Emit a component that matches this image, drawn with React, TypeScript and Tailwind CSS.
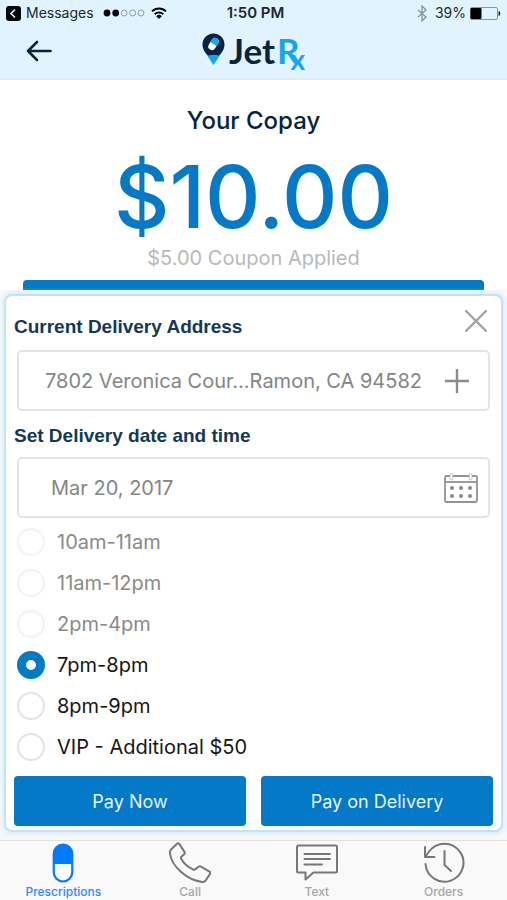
import { useState } from "react";

type Slot = { id: string; label: string; disabled?: boolean };

const slots: Slot[] = [
  { id: "10-11", label: "10am-11am", disabled: true },
  { id: "11-12", label: "11am-12pm", disabled: true },
  { id: "14-16", label: "2pm-4pm", disabled: true },
  { id: "19-20", label: "7pm-8pm" },
  { id: "20-21", label: "8pm-9pm" },
  { id: "vip", label: "VIP - Additional $50" },
];

function StatusBar() {
  return (
    <div className="grid h-[26px] grid-cols-3 items-center px-[6px] text-[14px] leading-[26px] text-[#1c2830]">
      <div className="flex items-center whitespace-nowrap">
        <svg width="15" height="15" viewBox="0 0 15 15" aria-hidden="true">
          <rect width="15" height="15" rx="3" fill="#05080a" />
          <path d="M9 3.5 5 7.5l4 4" fill="none" stroke="#e1f3fe" strokeWidth="1.6" />
        </svg>
        <span className="ml-[5px]">Messages</span>
        <svg className="ml-[9px]" width="43" height="10" viewBox="0 0 43 10" aria-hidden="true">
          <circle cx="4" cy="5" r="3.4" fill="#05080a" />
          <circle cx="12.7" cy="5" r="3.4" fill="#05080a" />
          <circle cx="21.2" cy="5" r="3" fill="none" stroke="#7d8a92" strokeWidth="0.8" />
          <circle cx="29.6" cy="5" r="3" fill="none" stroke="#7d8a92" strokeWidth="0.8" />
          <circle cx="38" cy="5" r="3" fill="none" stroke="#7d8a92" strokeWidth="0.8" />
        </svg>
        <svg className="ml-[5px] shrink-0" width="16" height="12" viewBox="0 0 16 12" aria-hidden="true">
          <g fill="none" stroke="#05080a" strokeWidth="1.9">
            <path d="M1 4.4a10 10 0 0 1 14 0" />
            <path d="M3.7 7.2a6.2 6.2 0 0 1 8.6 0" />
          </g>
          <path d="M8 12 5.2 9.2a4 4 0 0 1 5.6 0z" fill="#05080a" />
        </svg>
      </div>
      <div className="pl-1 text-center text-[15px] font-semibold">1:50 PM</div>
      <div className="flex items-center justify-end">
        <svg width="10" height="17" viewBox="0 0 10 17" fill="none" stroke="#84929a" strokeWidth="1.3" aria-hidden="true">
          <path d="M1 5l8 7-4 4V1l4 4-8 7" />
        </svg>
        <span className="ml-2">39%</span>
        <svg className="ml-1" width="31" height="13" viewBox="0 0 31 13" aria-hidden="true">
          <rect x="0.5" y="0.5" width="27" height="12" rx="1.5" fill="none" stroke="#8a969d" />
          <rect x="0.5" y="1" width="11" height="11" rx="1" fill="#000" />
          <path d="M29 4.5q2 2 0 4z" fill="#222" stroke="#222" />
        </svg>
      </div>
    </div>
  );
}

function Logo() {
  return (
    <div className="flex items-start font-['Lato',sans-serif] font-bold" role="img" aria-label="JetRx">
      <svg className="mt-[7px]" width="23" height="33" viewBox="0 0 23 33" aria-hidden="true">
        <path d="M3.5 20h16L11.5 32z" fill="#14a5f5" />
        <path d="M11.5 .5C5 .5 .5 5.500 .5 11.500c0 6 4 9.500 6 11q5 -1.500 10 0c2-1.500 6-5 6-11C22.500 5.500 18 .5 11.500 .5z" fill="#04243f" />
        <g transform="rotate(32 11.5 11)">
          <rect x="7.8" y="4.5" width="7.4" height="13" rx="3.7" fill="#fff" />
          <path d="M7.800 11V8.200a3.700 3.700 0 0 1 7.400 0V11z" fill="#14a5f5" />
        </g>
      </svg>
      <span className="ml-1 text-[35px] leading-[48px] text-[#04243f]">Jet</span>
      <span className="ml-[2px] text-[35px] leading-[48px] text-[#14a5f5]">R</span>
      <span className="-ml-[9px] mt-4 text-[28px] leading-[34px] text-[#14a5f5]">x</span>
    </div>
  );
}

function PillIcon() {
  return (
    <svg width="22" height="40" viewBox="0 0 22 40" aria-hidden="true">
      <rect x="1.75" y="1.5" width="18.5" height="37" rx="9.25" fill="#fafafa" stroke="#007aff" strokeWidth="2.2" />
      <path d="M1.750 21V11a9.250 9.250 0 0 1 18.500 0v10z" fill="#007aff" />
    </svg>
  );
}

function PhoneIcon() {
  return (
    <svg width="42" height="42" viewBox="0 0 42 42" fill="none" stroke="#777" strokeWidth="2" strokeLinejoin="round" aria-hidden="true">
      <path d="M2 7.500 8.300 1.600q1.200-1 2 .3l5.300 8.200q.6 1.200-.4 2.200l-2.800 2.500q-.8.800-.2 2 4 7.300 12 10.700 1.300.5 2.200-.4l3.300-2.400q1.100-.8 2.300-.1l8.500 5q1.400.9.600 2.300l-4.300 6.400q-1.200 1.700-3.600 1.600C18.500 38.500 2.500 24.500 1 11.500q-.3-2.500 1-4z" />
    </svg>
  );
}

function TextIcon() {
  return (
    <svg width="42" height="38" viewBox="0 0 42 38" fill="none" stroke="#777" strokeWidth="2" strokeLinejoin="round" aria-hidden="true">
      <path d="M2.500 1.500h37q1.500 0 1.500 1.500v24q0 1.500-1.500 1.500H17.500L9.500 35.500v-7h-7Q1 28.500 1 27V3q0-1.500 1.500-1.500z" />
      <path d="M8.500 10h25.500M8.500 15h25.500M8.500 20.500h17.500" strokeLinecap="round" />
    </svg>
  );
}

function OrdersIcon() {
  return (
    <svg width="42" height="42" viewBox="0 0 42 42" fill="none" stroke="#777" strokeWidth="2" strokeLinecap="round" strokeLinejoin="round" aria-hidden="true">
      <path d="M2.500 22a19 19 0 1 0 4-13L2.500 14.500" />
      <path d="M2 5v10h9.500" />
      <path d="M21.500 9v14l6.500 6" />
    </svg>
  );
}

function CalendarIcon() {
  return (
    <svg width="34" height="32" viewBox="0 0 34 32" fill="none" aria-hidden="true">
      <rect x="1" y="4" width="32" height="26" rx="1.5" stroke="#929292" strokeWidth="1.8" />
      <path d="M1 10h32" stroke="#929292" strokeWidth="1.8" />
      <rect x="6" y="1.500" width="2.8" height="6.500" rx="1.4" fill="#fff" stroke="#bcbcbc" />
      <rect x="25.200" y="1.500" width="2.8" height="6.500" rx="1.4" fill="#fff" stroke="#bcbcbc" />
      <g fill="#8a8a8a">
        <circle cx="8" cy="16" r="2" />
        <circle cx="17" cy="16" r="2" />
        <circle cx="26" cy="16" r="2" />
        <circle cx="8" cy="24" r="2" />
        <circle cx="17" cy="24" r="2" />
        <circle cx="26" cy="24" r="2" />
      </g>
    </svg>
  );
}

const tabs = [
  { label: "Prescriptions", icon: <PillIcon />, active: true },
  { label: "Call", icon: <PhoneIcon />, active: false },
  { label: "Text", icon: <TextIcon />, active: false },
  { label: "Orders", icon: <OrdersIcon />, active: false },
];

export default function App() {
  const [slot, setSlot] = useState("19-20");
  const [address, setAddress] = useState("7802 Veronica Cour...Ramon, CA 94582");
  const [date, setDate] = useState("Mar 20, 2017");

  return (
    <div className="flex min-h-screen flex-col bg-white font-['Inter','Liberation_Sans',sans-serif]">
      <header className="h-20 border-b-2 border-[#d9ebf6] bg-[#e1f3fe]">
        <StatusBar />
        <div className="grid h-[50px] grid-cols-[1fr_auto_1fr] items-center px-[26px]">
          <button type="button" aria-label="Back" className="w-[26px]">
            <svg width="26" height="22" viewBox="0 0 26 22" fill="none" stroke="#04243f" strokeWidth="2.6" strokeLinecap="round" strokeLinejoin="round" aria-hidden="true">
              <path d="M24.500 11H2M11 2 2 11l9 9" />
            </svg>
          </button>
          <Logo />
        </div>
      </header>

      <section className="flex h-[200px] flex-col items-center pt-[25px]">
        <h1 className="text-[24px] leading-8 font-medium text-[#04243f]">Your Copay</h1>
        <p className="mt-[10px] text-[86px] leading-[100px] font-medium text-[#0379c7]">$10.00</p>
        <p className="text-[20px] leading-[22px] text-[#b9b9b9]">$5.00 Coupon Applied</p>
      </section>
      <div className="mx-[23px] h-[10px] rounded-t-[4px] bg-[#0379c7]" />

      <main className="flex flex-1 flex-col bg-[#f7f8fa] px-1 pt-1 pb-2">
        <form
          className="flex flex-1 flex-col rounded-[8px] border-2 border-[#c5e2f5] bg-white px-2 pb-1 shadow-[0_0_4px_2px_#d9eefa]"
          onSubmit={(e) => e.preventDefault()}
        >
          <div className="flex h-[54px] items-center justify-between pt-[8px]">
            <label htmlFor="address" className="font-['Liberation_Sans',sans-serif] text-[19px] leading-6 font-bold text-[#123a56]">
              Current Delivery Address
            </label>
            <button type="button" aria-label="Close" className="mr-[6px] -mt-[12px]">
              <svg width="22" height="22" viewBox="0 0 22 22" stroke="#a3a3a3" strokeWidth="2.4" strokeLinecap="round" aria-hidden="true">
                <path d="M1 1l20 20M21 1 1 21" />
              </svg>
            </button>
          </div>
          <div className="mx-[3px] flex h-[61px] items-center rounded-[5px] border-2 border-[#e4e4e4] pr-[19px] pl-[26px]">
            <input
              id="address"
              value={address}
              onChange={(e) => setAddress(e.target.value)}
              className="h-full min-w-0 flex-1 text-[20px] text-[#858585] outline-none"
            />
            <button type="button" aria-label="Add address">
              <svg width="24" height="24" viewBox="0 0 24 24" stroke="#8c8c8c" strokeWidth="2.4" aria-hidden="true">
                <path d="M12 0v24M0 12h24" />
              </svg>
            </button>
          </div>
          <label htmlFor="date" className="flex h-[46px] items-center pt-[4px] font-['Liberation_Sans',sans-serif] text-[19px] leading-6 font-bold text-[#123a56]">
            Set Delivery date and time
          </label>
          <div className="mx-[3px] flex h-[61px] items-center rounded-[5px] border-2 border-[#e4e4e4] pr-[10px] pl-8">
            <input
              id="date"
              value={date}
              onChange={(e) => setDate(e.target.value)}
              className="h-full min-w-0 flex-1 text-[20px] text-[#858585] outline-none"
            />
            <button type="button" aria-label="Choose date">
              <CalendarIcon />
            </button>
          </div>

          <div role="radiogroup" aria-label="Delivery time" className="mt-[3px] mb-2 flex flex-1 flex-col">
            {slots.map((s) => (
              <label
                key={s.id}
                className={
                  "flex min-h-8 flex-1 items-center gap-3 pl-[3px] text-[20px] leading-7 " +
                  (s.disabled ? "text-[#8a8a8a]" : "text-[#161616]")
                }
              >
                <input
                  type="radio"
                  name="slot"
                  value={s.id}
                  checked={slot === s.id}
                  disabled={s.disabled}
                  onChange={() => setSlot(s.id)}
                  className="size-7 appearance-none rounded-full border-2 border-[#e4e4e4] bg-white checked:border-[9px] checked:border-[#0379c7] disabled:border-[#f3f3f3]"
                />
                {s.label}
              </label>
            ))}
          </div>

          <div className="grid grid-cols-2 gap-[15px]">
            <button type="button" className="h-[50px] rounded-[4px] bg-[#0379c7] text-[18px] text-[#e6f4fd]">
              Pay Now
            </button>
            <button type="button" className="h-[50px] rounded-[4px] bg-[#0379c7] text-[18px] text-[#e6f4fd]">
              Pay on Delivery
            </button>
          </div>
        </form>
      </main>

      <nav className="grid h-[60px] grid-cols-4 border-t border-[#e2dfdf] bg-[#f9f9f9]">
        {tabs.map((t) => (
          <a
            key={t.label}
            href="#"
            className={
              "flex flex-col items-center text-[12px] leading-4 font-medium " +
              (t.active ? "text-[#2b8cff]" : "text-[#a6a6a6]")
            }
          >
            <span className="flex h-[43px] items-center">{t.icon}</span>
            {t.label}
          </a>
        ))}
      </nav>
    </div>
  );
}
